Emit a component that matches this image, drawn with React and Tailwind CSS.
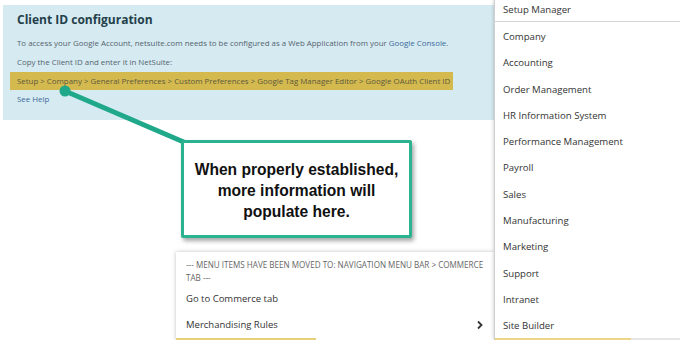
import React from "react";

const menu = [
  "Company",
  "Accounting",
  "Order Management",
  "HR Information System",
  "Performance Management",
  "Payroll",
  "Sales",
  "Manufacturing",
  "Marketing",
  "Support",
  "Intranet",
  "Site Builder",
];

export default function App() {
  return (
    <div
      className="relative w-[680px] h-[340px] overflow-hidden bg-white"
      style={{ fontFamily: '"Open Sans", "Noto Sans", sans-serif' }}
    >
      {/* Blue config panel */}
      <div className="ml-[3px] mt-[5px] w-[500px] h-[115px] bg-[#d5eaf1] pt-[6px]">
        <h2 className="pl-[14px] text-[12px] font-bold text-[#23404a] leading-[18px]">
          Client ID configuration
        </h2>
        <p className="pl-[14px] mt-[7.5px] text-[7.9px] leading-[13px] text-[#55646f] whitespace-nowrap">
          To access your Google Account, netsuite.com needs to be configured as a Web Application from your{" "}
          <span className="text-[#3d6b9a]">Google Console</span>.
        </p>
        <p className="pl-[14px] mt-[6px] text-[7.9px] leading-[13px] text-[#55646f]">
          Copy the Client ID and enter it in NetSuite:
        </p>
        <div className="mt-[3.5px] ml-[7px] w-[443px] h-[18px] bg-[#d4b94f] pl-[7px] flex items-center">
          <span className="text-[7.9px] leading-[13px] text-[#5d5a3c] whitespace-nowrap">
            Setup &gt; Company &gt; General Preferences &gt; Custom Preferences &gt; Google Tag Manager Editor &gt; Google OAuth Client ID
          </span>
        </div>
        <p className="pl-[14px] mt-[2.5px] text-[7.9px] leading-[13px] text-[#3d6b9a]">See Help</p>
      </div>

      {/* Arrow */}
      <svg className="absolute left-0 top-0 pointer-events-none" width="680" height="340">
        <line x1="65" y1="91" x2="186" y2="143" stroke="#1fa98a" strokeWidth="5" strokeLinecap="round" />
        <circle cx="65" cy="91" r="5.5" fill="#1fa98a" />
      </svg>

      {/* Callout */}
      <div className="absolute left-[181px] top-[140px] w-[231px] h-[98px] bg-white border-[3px] border-[#2bb38f] rounded-[2px] shadow-[2px_3px_4px_rgba(0,0,0,0.35)] flex items-center justify-center">
        <p
          className="text-center text-[15.6px] font-bold leading-[21px] text-[#111] mt-[2px]"
          style={{ fontFamily: '"Liberation Sans", Arial, sans-serif' }}
        >
          When properly established,
          <br />
          more information will
          <br />
          populate here.
        </p>
      </div>

      {/* Bottom dropdown */}
      <div className="absolute left-[176px] top-[252px] w-[318px] h-[88px] bg-white shadow-[0_0_4px_rgba(0,0,0,0.25)]">
        <p className="px-[10px] pt-[6px] text-[8.1px] leading-[13px] text-[#666] uppercase">
          --- Menu items have been moved to: Navigation menu bar &gt; Commerce tab ---
        </p>
        <div className="px-[10px] h-[26px] mt-[2px] flex items-center text-[9.5px] text-[#333]">Go to Commerce tab</div>
        <div className="px-[10px] h-[26px] flex items-center justify-between text-[9.5px] text-[#333]">
          <span>Merchandising Rules</span>
          <svg width="8" height="10" viewBox="0 0 8 10">
            <path d="M2 1.5 L5.5 5 L2 8.5" fill="none" stroke="#333" strokeWidth="1.8" />
          </svg>
        </div>
        <div className="absolute left-0 bottom-0 w-[140px] h-[2px] bg-[#e8cf7a]" />
      </div>

      {/* Right dropdown */}
      <div className="absolute left-[494px] top-0 w-[186px] h-[340px] bg-white border-l border-[#d0d0d0] shadow-[-1px_0_3px_rgba(0,0,0,0.15)]">
        <div className="h-[22px] pl-[8px] flex items-center text-[9.6px] text-[#333] border-b border-[#d5d5d5]">
          Setup Manager
        </div>
        <div className="pt-[2px]">
          {menu.map((m) => (
            <div key={m} className="h-[26.3px] pl-[8px] flex items-center text-[9.6px] text-[#333]">
              {m}
            </div>
          ))}
        </div>
        <div className="absolute left-0 bottom-0 w-[136px] h-[2px] bg-[#ecd489]" />
        <div className="absolute left-[136px] bottom-0 right-0 h-[2px] bg-[#e6e6e6]" />
      </div>
    </div>
  );
}
